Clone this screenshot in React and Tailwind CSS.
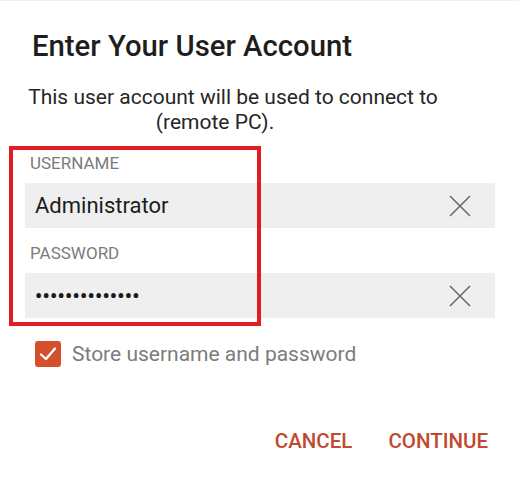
import React, { useState } from 'react';

const ClearIcon = () => (
  <svg width="24" height="24" viewBox="0 0 24 24" className="text-[#6b6b6b]">
    <path d="M2 2 L22 22 M22 2 L2 22" stroke="currentColor" strokeWidth="1.6" fill="none" />
  </svg>
);

const Field = ({ label, value, secret }) => (
  <div>
    <div className="pl-[5px] h-[45px] pt-[15px] text-[17px] leading-[20px] text-[#7b7b7b]">{label}</div>
    <div className="h-[45px] bg-[#efefef] flex items-center justify-between pl-[10px] pr-[23px]">
      {secret ? (
        <span className="text-[20px] tracking-[0.3px] text-[#1a1a1a] font-bold leading-none">{value}</span>
      ) : (
        <span className="text-[22px] text-[#1c1c1c]">{value}</span>
      )}
      <ClearIcon />
    </div>
  </div>
);

export default function App() {
  const [store, setStore] = useState(true);

  return (
    <div className="relative w-[519px] h-[481px] bg-white border-t border-[#f0f0f0] font-['Roboto',sans-serif]">
      <h1 className="pl-[32px] pt-[28px] text-[29.3px] leading-[34px] font-medium text-[#1e1e1e]">
        Enter Your User Account
      </h1>

      <div className="mt-[22px] w-[466px] text-center text-[21px] leading-[25px] text-[#262626]">
        <div>This user account will be used to connect to</div>
        <div className="pr-[36px]">(remote PC).</div>
      </div>

      <div className="mt-[3px] px-[25px] w-[520px] flex flex-col">
        <Field label="USERNAME" value="Administrator" />
        <Field label="PASSWORD" value="••••••••••••••" secret />
      </div>

      <div className="absolute left-[9px] top-[145px] w-[252px] h-[180px] border-[4px] border-[#e31b23]" />

      <label className="mt-[21px] ml-[35px] flex items-center gap-[11px] cursor-pointer">
        <span
          onClick={() => setStore(!store)}
          className="w-[26px] h-[26px] rounded-[3px] bg-[#d3502d] flex items-center justify-center"
        >
          {store && (
            <svg width="20" height="20" viewBox="0 0 20 20">
              <path d="M3 10.5 L8 15 L17 4.5" stroke="white" strokeWidth="2.3" fill="none" strokeLinecap="round" strokeLinejoin="round" />
            </svg>
          )}
        </span>
        <span className="text-[21px] leading-[30px] text-[#7c7c7c]">Store username and password</span>
      </label>

      <div className="mt-[57px] flex justify-end gap-[36px] pr-[31px] text-[20.5px] font-medium text-[#bf4a2d]">
        <button>CANCEL</button>
        <button>CONTINUE</button>
      </div>
    </div>
  );
}
